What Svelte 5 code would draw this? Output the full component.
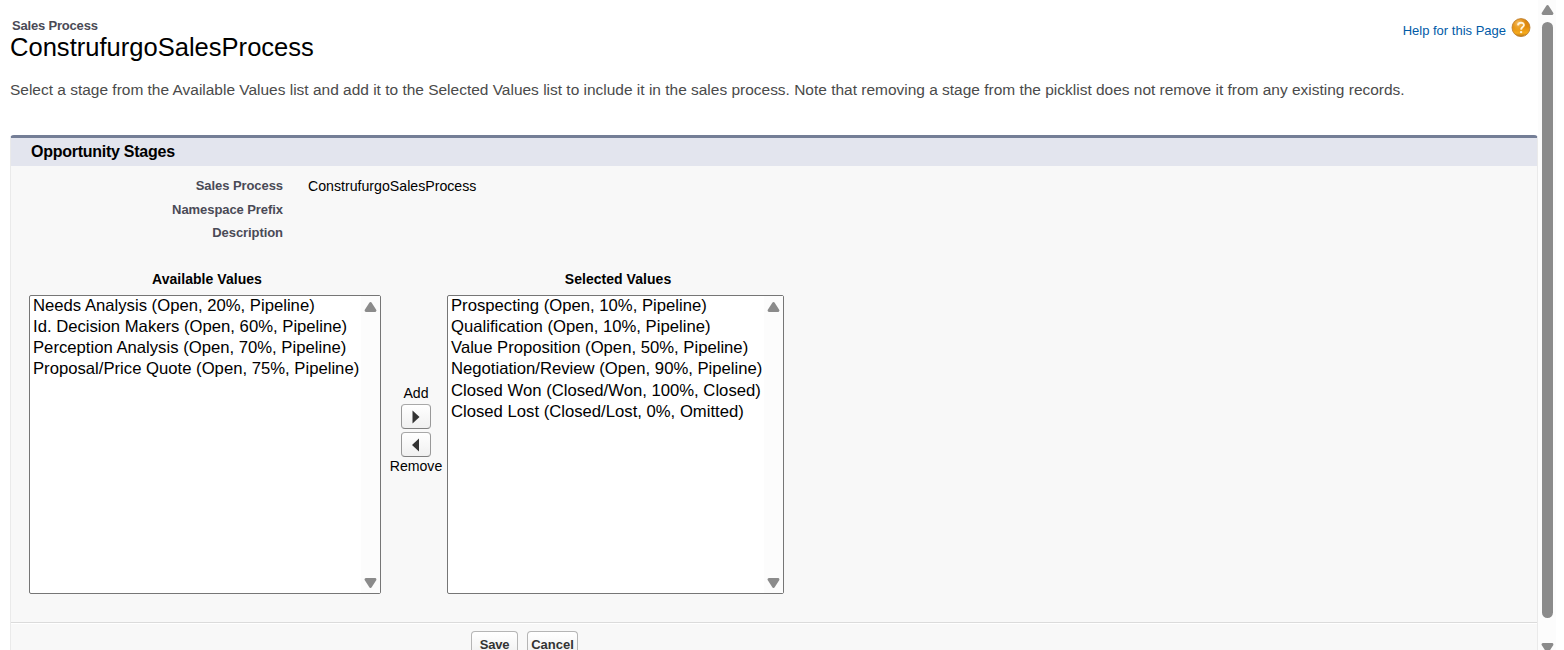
<script>
  const processName = 'ConstrufurgoSalesProcess';
  const details = [
    ['Sales Process', processName],
    ['Namespace Prefix', ''],
    ['Description', '']
  ];
  const available = [
    'Needs Analysis (Open, 20%, Pipeline)',
    'Id. Decision Makers (Open, 60%, Pipeline)',
    'Perception Analysis (Open, 70%, Pipeline)',
    'Proposal/Price Quote (Open, 75%, Pipeline)'
  ];
  const selected = [
    'Prospecting (Open, 10%, Pipeline)',
    'Qualification (Open, 10%, Pipeline)',
    'Value Proposition (Open, 50%, Pipeline)',
    'Negotiation/Review (Open, 90%, Pipeline)',
    'Closed Won (Closed/Won, 100%, Closed)',
    'Closed Lost (Closed/Lost, 0%, Omitted)'
  ];
</script>

{#snippet arrow(down)}
  <svg class="arrow" class:down width="13" height="10" viewBox="0 0 13 10">
    <path d="M6.5 1.5 11 8.5H2Z" fill="#8b8b8b" stroke="#8b8b8b" stroke-width="2.8" stroke-linejoin="round" />
  </svg>
{/snippet}

{#snippet list(title, items, kind)}
  <div class="picker {kind}">
    <div class="list-title">{title}</div>
    <div class="listbox">
      <div class="options">
        {#each items as item}<div class="option">{item}</div>{/each}
      </div>
      <div class="track">{@render arrow(false)}{@render arrow(true)}</div>
    </div>
  </div>
{/snippet}

<div class="window">
  <main>
    <header>
      <div class="titles">
        <div class="kind">Sales Process</div>
        <h1>{processName}</h1>
      </div>
      <div class="help">
        <span>Help for this Page</span>
        <svg width="20" height="20" viewBox="0 0 20 20">
          <defs>
            <linearGradient id="amber" x1="0" y1="0" x2="0" y2="1">
              <stop offset="0" stop-color="#d88310" />
              <stop offset=".45" stop-color="#e08a0c" />
              <stop offset=".8" stop-color="#f6ab1c" />
              <stop offset="1" stop-color="#b87514" />
            </linearGradient>
            <radialGradient id="shine" cx=".35" cy=".25" r=".45">
              <stop offset="0" stop-color="#ffd890" stop-opacity=".75" />
              <stop offset="1" stop-color="#ffc040" stop-opacity="0" />
            </radialGradient>
          </defs>
          <circle cx="10" cy="9.6" r="9" fill="url(#amber)" stroke="#b87a2c" stroke-width=".8" />
          <circle cx="10" cy="9.6" r="8.6" fill="url(#shine)" />
          <path d="M7 7.4C7.1 3.8 13 3.9 12.9 7.2 12.8 9.2 10.2 9.1 10.1 11.6" fill="none" stroke="#fff4dc" stroke-width="1.9" />
          <circle cx="10.1" cy="14.1" r="1.2" fill="#fff4dc" />
        </svg>
      </div>
    </header>
    <p class="intro">Select a stage from the Available Values list and add it to the Selected Values list to include it in the sales process. Note that removing a stage from the picklist does not remove it from any existing records.</p>

    <section>
      <h2>Opportunity Stages</h2>
      <div class="details">
        {#each details as [label, value]}
          <div class="detail"><div class="label">{label}</div><div class="value">{value}</div></div>
        {/each}
      </div>
      <div class="pickers">
        {@render list('Available Values', available, 'available')}
        <div class="moves">
          <span>Add</span>
          <button aria-label="Add"><svg width="8" height="14" viewBox="0 0 8 14"><path d="M.5.5 7.5 7 .5 13.5Z" fill="#333" /></svg></button>
          <button aria-label="Remove"><svg width="8" height="14" viewBox="0 0 8 14"><path d="M7 .5 0 7l7 6.5Z" fill="#333" /></svg></button>
          <span>Remove</span>
        </div>
        {@render list('Selected Values', selected, 'selected')}
      </div>
      <footer>
        <button class="save">Save</button>
        <button class="cancel">Cancel</button>
      </footer>
    </section>
  </main>
  <div class="page-scroll">
    {@render arrow(false)}
    <div class="thumb"></div>
    {@render arrow(true)}
  </div>
</div>

<style>
  :global(body) { background: #fff; overflow: hidden; }
  * { box-sizing: border-box; }
  .window {
    display: flex;
    height: 650px;
    overflow: hidden;
    font-family: "Liberation Sans", Arial, sans-serif;
    color: #000;
    white-space: nowrap;
  }
  main { width: 1538px; padding: 0 0 0 10px; }
  header { display: flex; justify-content: space-between; height: 72px; padding: 18px 7px 0 0; }
  .kind { font-size: 13px; font-weight: bold; line-height: 15px; letter-spacing: -.19px; color: #4a4a56; padding-left: 2px; }
  h1 { margin: 0; font-size: 25.55px; font-weight: normal; line-height: 29px; }
  .help { display: flex; align-items: flex-start; gap: 5px; font-size: 13px; line-height: 25px; color: #015ba7; }
  .intro { margin: 0; height: 63px; padding-top: 8px; font-size: 15.47px; line-height: 20px; color: #4a4a4a; }
  section {
    width: 1528px;
    height: 540px;
    background: #f8f8f8;
    border: 1px solid #eaeaea;
    border-top: 3px solid #747e96;
    border-radius: 4px 4px 0 0;
  }
  h2 { margin: 0; height: 28px; padding-left: 20px; background: #e3e5ee; font-size: 16px; line-height: 27px; letter-spacing: -.26px; }
  .details { padding-top: 8px; height: 104px; }
  .detail { display: flex; height: 23.5px; line-height: 24px; }
  .label { width: 272px; text-align: right; font-size: 13px; font-weight: bold; letter-spacing: -.07px; color: #4a4a56; }
  .value { padding-left: 25px; font-size: 14.17px; }
  .pickers { display: flex; height: 352px; padding-left: 18px; }
  .list-title { height: 25px; padding-left: 4px; text-align: center; font-size: 14px; font-weight: bold; line-height: 18px; letter-spacing: .04px; }
  .available { width: 352px; }
  .selected { width: 337px; }
  .selected .list-title { padding-left: 5px; }
  .listbox { display: flex; height: 299px; background: #fff; border: 1px solid #767676; border-radius: 2px; }
  .options { flex: 1; padding-left: 3px; font-size: 16.68px; }
  .option { height: 21.15px; line-height: 20px; }
  .track { display: flex; flex-direction: column; align-items: center; justify-content: space-between; width: 19px; padding: 6px 1px 5px 0; background: #fcfcfc; }
  .arrow { display: block; flex: none; }
  .down { transform: rotate(180deg); }
  .moves { display: flex; flex-direction: column; align-items: center; width: 66px; padding: 114px 0 0 4px; font-size: 14.1px; line-height: 18px; }
  button {
    display: flex;
    align-items: center;
    justify-content: center;
    padding: 0;
    border: 1px solid #b5b5b5;
    border-bottom-color: #7f7f7f;
    border-radius: 4px;
    background: linear-gradient(#fff, #f0f0f0);
    font: bold 13px "Liberation Sans", Arial, sans-serif;
    color: #333;
  }
  .moves button { width: 30px; height: 25px; margin: 2px 0 1px; border-color: #a8a8a8 #999 #7f7f7f; }
  .moves button + span { margin-top: -1px; }
  footer { display: flex; gap: 9px; height: 50px; padding: 8px 0 0 460px; border-top: 1px solid #dbdbdb; box-shadow: inset 0 1px #fff; }
  footer button { height: 26px; }
  .save { width: 47px; letter-spacing: -.2px; }
  .cancel { width: 51px; }
  .page-scroll { display: flex; flex-direction: column; align-items: center; width: 18px; padding-top: 5px; background: #fcfcfc; }
  .thumb { flex: none; width: 11px; height: 596px; margin: 7px 0 25px; border-radius: 6px; background: #8b8b8b; }
</style>
